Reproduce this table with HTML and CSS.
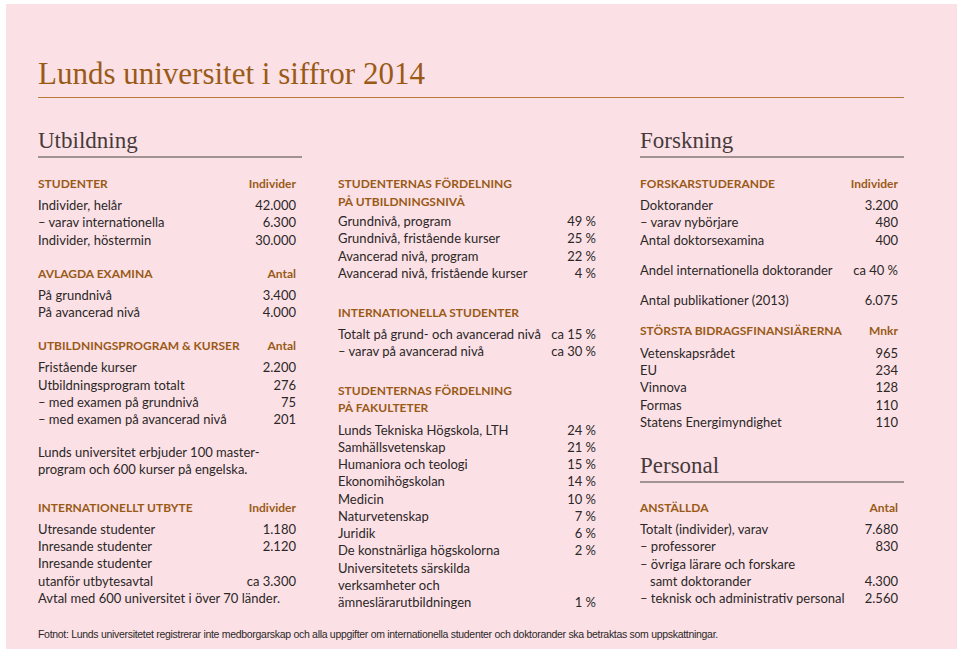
FILE: index.html
```html
<!DOCTYPE html>
<html lang="sv">
<head>
<meta charset="utf-8">
<title>Lunds universitet i siffror 2014</title>
<link rel="stylesheet" href="styles.css">
</head>
<body>
<div class="page">
  <h1 class="title">Lunds universitet i siffror 2014</h1>
  <div class="heads">
    <h2 class="sec-title">Utbildning</h2>
    <h2 class="sec-title">Forskning</h2>
  </div>
  <div class="cols">
    <div class="col col-left">
      <div class="grp">
        <div class="hd"><span>STUDENTER</span><span>Individer</span></div>
        <div class="row"><span>Individer, helår</span><span>42.000</span></div>
        <div class="row"><span>– varav internationella</span><span>6.300</span></div>
        <div class="row"><span>Individer, höstermin</span><span>30.000</span></div>
      </div>
      <div class="grp">
        <div class="hd"><span>AVLAGDA EXAMINA</span><span>Antal</span></div>
        <div class="row"><span>På grundnivå</span><span>3.400</span></div>
        <div class="row"><span>På avancerad nivå</span><span>4.000</span></div>
      </div>
      <div class="grp">
        <div class="hd"><span>UTBILDNINGSPROGRAM &amp; KURSER</span><span>Antal</span></div>
        <div class="row"><span>Fristående kurser</span><span>2.200</span></div>
        <div class="row"><span>Utbildningsprogram totalt</span><span>276</span></div>
        <div class="row"><span>– med examen på grundnivå</span><span>75</span></div>
        <div class="row"><span>– med examen på avancerad nivå</span><span>201</span></div>
      </div>
      <p class="grp note">Lunds universitet erbjuder 100 master-<br>program och 600 kurser på engelska.</p>
      <div class="grp grp-wide">
        <div class="hd"><span>INTERNATIONELLT UTBYTE</span><span>Individer</span></div>
        <div class="row"><span>Utresande studenter</span><span>1.180</span></div>
        <div class="row"><span>Inresande studenter</span><span>2.120</span></div>
        <div class="row"><span>Inresande studenter</span><span></span></div>
        <div class="row"><span>utanför utbytesavtal</span><span>ca 3.300</span></div>
        <div class="row"><span>Avtal med 600 universitet i över 70 länder.</span></div>
      </div>
    </div>

    <div class="col col-mid">
      <div class="grp">
        <div class="hd hd-two"><span>STUDENTERNAS FÖRDELNING<br>PÅ UTBILDNINGSNIVÅ</span></div>
        <div class="row"><span>Grundnivå, program</span><span>49 %</span></div>
        <div class="row"><span>Grundnivå, fristående kurser</span><span>25 %</span></div>
        <div class="row"><span>Avancerad nivå, program</span><span>22 %</span></div>
        <div class="row"><span>Avancerad nivå, fristående kurser</span><span>4 %</span></div>
      </div>
      <div class="grp grp-mid">
        <div class="hd"><span>INTERNATIONELLA STUDENTER</span></div>
        <div class="row"><span>Totalt på grund- och avancerad nivå</span><span>ca 15 %</span></div>
        <div class="row"><span>– varav på avancerad nivå</span><span>ca 30 %</span></div>
      </div>
      <div class="grp grp-mid">
        <div class="hd hd-fak"><span>STUDENTERNAS FÖRDELNING<br>PÅ FAKULTETER</span></div>
        <div class="row"><span>Lunds Tekniska Högskola, LTH</span><span>24 %</span></div>
        <div class="row"><span>Samhällsvetenskap</span><span>21 %</span></div>
        <div class="row"><span>Humaniora och teologi</span><span>15 %</span></div>
        <div class="row"><span>Ekonomihögskolan</span><span>14 %</span></div>
        <div class="row"><span>Medicin</span><span>10 %</span></div>
        <div class="row"><span>Naturvetenskap</span><span>7 %</span></div>
        <div class="row"><span>Juridik</span><span>6 %</span></div>
        <div class="row"><span>De konstnärliga högskolorna</span><span>2 %</span></div>
        <div class="row"><span>Universitetets särskilda</span><span></span></div>
        <div class="row"><span>verksamheter och</span><span></span></div>
        <div class="row"><span>ämneslärarutbildningen</span><span>1 %</span></div>
      </div>
    </div>

    <div class="col col-right">
      <div class="grp">
        <div class="hd"><span>FORSKARSTUDERANDE</span><span>Individer</span></div>
        <div class="row"><span>Doktorander</span><span>3.200</span></div>
        <div class="row"><span>– varav nybörjare</span><span>480</span></div>
        <div class="row"><span>Antal doktorsexamina</span><span>400</span></div>
      </div>
      <div class="grp grp-tight">
        <div class="row"><span>Andel internationella doktorander</span><span>ca 40 %</span></div>
      </div>
      <div class="grp grp-tight">
        <div class="row"><span>Antal publikationer (2013)</span><span>6.075</span></div>
      </div>
      <div class="grp grp-tight">
        <div class="hd hd-loose"><span>STÖRSTA BIDRAGSFINANSIÄRERNA</span><span>Mnkr</span></div>
        <div class="row"><span>Vetenskapsrådet</span><span>965</span></div>
        <div class="row"><span>EU</span><span>234</span></div>
        <div class="row"><span>Vinnova</span><span>128</span></div>
        <div class="row"><span>Formas</span><span>110</span></div>
        <div class="row"><span>Statens Energimyndighet</span><span>110</span></div>
      </div>
      <h2 class="sec-title sec-sub">Personal</h2>
      <div class="grp grp-first">
        <div class="hd"><span>ANSTÄLLDA</span><span>Antal</span></div>
        <div class="row"><span>Totalt (individer), varav</span><span>7.680</span></div>
        <div class="row"><span>– professorer</span><span>830</span></div>
        <div class="row"><span>– övriga lärare och forskare</span><span></span></div>
        <div class="row"><span class="indent">samt doktorander</span><span>4.300</span></div>
        <div class="row"><span>– teknisk och administrativ personal</span><span>2.560</span></div>
      </div>
    </div>
  </div>
  <p class="foot">Fotnot: Lunds universitetet registrerar inte medborgarskap och alla uppgifter om internationella studenter och doktorander ska betraktas som uppskattningar.</p>
</div>
</body>
</html>
```

FILE: styles.css
```css
html, body {
  margin: 0;
  padding: 0;
  background: #ffffff;
}

.page {
  margin: 4px 3px 2px 6px;
  height: 645px;
  box-sizing: border-box;
  background: #fbe1e6;
  padding: 52px 50px 0 32px;
  font-family: "Lato", "Liberation Sans", sans-serif;
  font-size: 13px;
  color: #2b2727;
}

.title {
  margin: 0;
  font-family: "Liberation Serif", serif;
  font-weight: normal;
  font-size: 31px;
  line-height: 36px;
  color: #9a5a16;
  padding-bottom: 5px;
  border-bottom: 1.5px solid #b87a3c;
  width: 866px;
}

.heads {
  display: flex;
  justify-content: space-between;
  width: 866px;
  margin-top: 30px;
}

.sec-title {
  margin: 0;
  width: 264px;
  font-family: "Liberation Serif", serif;
  font-weight: normal;
  font-size: 23px;
  line-height: 26px;
  color: #463a3a;
  padding-bottom: 2px;
  border-bottom: 2px solid #a19393;
}

.cols {
  display: flex;
  margin-top: 17px;
}

.col {
  width: 264px;
  box-sizing: border-box;
  padding-right: 6px;
}

.col-mid {
  margin-left: 36px;
  margin-right: 38px;
}

.grp {
  margin: 16px 0 0;
}

.grp:first-child,
.grp-first {
  margin-top: 0;
}

.grp-wide {
  margin-top: 20.5px;
}

.grp-mid {
  margin-top: 21.5px;
}

.grp-tight {
  margin-top: 13px;
}

.hd {
  display: flex;
  justify-content: space-between;
  font-weight: bold;
  font-size: 12px;
  line-height: 17.5px;
  color: #9a5a16;
  margin-bottom: 4.5px;
}

.hd-two {
  margin-bottom: 3px;
}

.hd-fak {
  margin-bottom: 5px;
}

.hd-loose {
  margin-bottom: 5px;
}

.row {
  display: flex;
  justify-content: space-between;
  line-height: 17.25px;
  white-space: nowrap;
}

.indent {
  padding-left: 10px;
}

.note {
  line-height: 17px;
}

.sec-sub {
  margin-top: 22px;
  margin-bottom: 16px;
  width: 264px;
}

.foot {
  margin: 17px 0 0;
  font-family: "Liberation Sans", sans-serif;
  font-size: 10.5px;
  letter-spacing: -0.3px;
  color: #2b2727;
}
```
